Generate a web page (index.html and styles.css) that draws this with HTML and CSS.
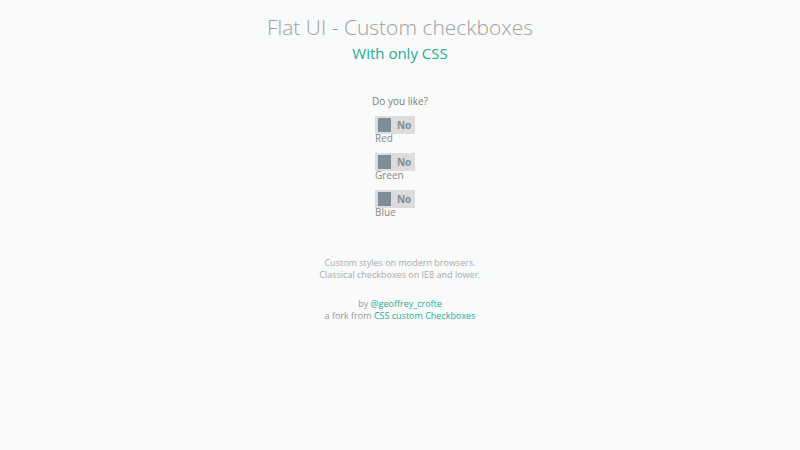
FILE: index.html
```html
<!DOCTYPE html>
<html>
<head>
<meta charset="utf-8">
<link rel="stylesheet" href="styles.css">
</head>
<body>
<div class="page">
  <h1 class="title">Flat UI - Custom checkboxes</h1>
  <h2 class="subtitle">With only CSS</h2>
  <div class="form">
    <p class="question">Do you like?</p>
    <div class="items">
      <div class="item">
        <span class="toggle"><span class="knob"></span><span class="state">No</span></span>
        <span class="label">Red</span>
      </div>
      <div class="item">
        <span class="toggle"><span class="knob"></span><span class="state">No</span></span>
        <span class="label">Green</span>
      </div>
      <div class="item">
        <span class="toggle"><span class="knob"></span><span class="state">No</span></span>
        <span class="label">Blue</span>
      </div>
    </div>
  </div>
  <p class="note">Custom styles on modern browsers.<br>Classical checkboxes on IE8 and lower.</p>
  <p class="credits">by <a href="#">@geoffrey_crofte</a><br>a fork from <a href="#">CSS custom Checkboxes</a></p>
</div>
</body>
</html>
```
FILE: styles.css
```css
html, body {
  margin: 0;
  padding: 0;
  background: #f9fbfa;
}
body {
  font-family: "Open Sans", sans-serif;
  color: #777;
}
.page {
  display: flex;
  flex-direction: column;
  align-items: center;
  padding-top: 12px;
}
.title {
  margin: 0;
  font-size: 21px;
  font-weight: 300;
  color: #a0a0a0;
  line-height: 30px;
}
.subtitle {
  margin: 1px 0 0;
  font-size: 15px;
  font-weight: 400;
  color: #1fab94;
  line-height: 20px;
}
.form {
  margin-top: 31px;
  display: flex;
  flex-direction: column;
  align-items: center;
}
.question {
  margin: 0 0 8px;
  font-size: 10px;
  line-height: 14px;
  color: #7d7d7d;
}
.items {
  width: 50px;
  display: flex;
  flex-direction: column;
  align-items: flex-start;
}
.item {
  display: flex;
  flex-direction: column;
  align-items: flex-start;
  margin-bottom: 8px;
}
.toggle {
  display: flex;
  align-items: center;
  width: 40px;
  height: 18px;
  background: #dcdcdc;
  box-sizing: border-box;
  padding-left: 3px;
}
.knob {
  width: 13px;
  height: 14px;
  background: #7f8c99;
}
.state {
  margin-left: 6px;
  font-size: 10px;
  font-weight: 700;
  color: #7f8c99;
}
.label {
  font-size: 10px;
  line-height: 13px;
  color: #888;
  margin-top: -2px;
}
.note {
  margin: 30px 0 0;
  text-align: center;
  font-size: 9px;
  line-height: 12px;
  color: #aaa;
}
.credits {
  margin: 17px 0 0;
  text-align: center;
  font-size: 9px;
  line-height: 12px;
  color: #999;
}
.credits a {
  color: #1fab94;
  text-decoration: none;
}
```
